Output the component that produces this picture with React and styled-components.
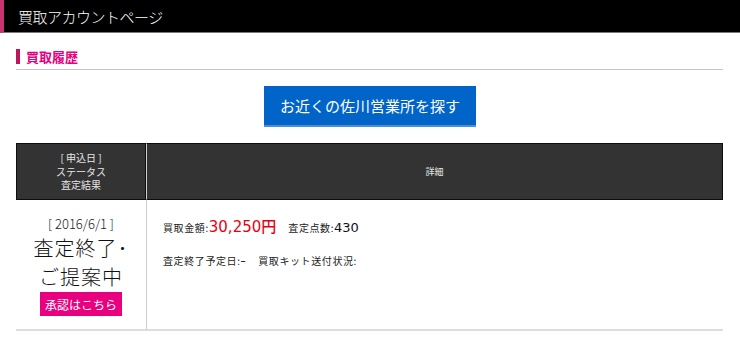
import React from 'react';
import styled, { createGlobalStyle } from 'styled-components';

const Global = createGlobalStyle`
    body {
        margin: 0;
        background: #ffffff;
        font-family: "Noto Sans CJK JP", "Noto Sans", sans-serif;
        color: #222222;
    }
`

const Page = styled.div`
    width: 740px;
    height: 343px;
    overflow: hidden;
    background: #ffffff;
`

const TopBar = styled.header`
    height: 32px;
    background: #000000;
    border-left: 4px solid #c83370;
    border-bottom: 1px solid #7a7a7a;
    display: flex;
    align-items: center;
    padding-left: 14px;
`

const TopTitle = styled.h1`
    margin: 0;
    font-size: 15px;
    font-weight: 300;
    color: #ffffff;
    letter-spacing: -0.5px;
`

const Content = styled.main`
    padding: 16px 17px 0 16px;
`

const SectionTitle = styled.h2`
    margin: 0;
    display: flex;
    align-items: center;
    height: 15px;
    padding-left: 6px;
    border-left: 4px solid #c0155a;
    font-size: 13px;
    font-weight: bold;
    color: #e4007f;
    line-height: 15px;
`

const Rule = styled.div`
    margin-top: 5px;
    height: 1px;
    background: #c4c4c4;
`

const ButtonRow = styled.div`
    display: flex;
    justify-content: center;
    padding: 16px 0 16px 1px;
`

const SearchButton = styled.button`
    width: 212px;
    height: 41px;
    background: #0064c8;
    border: none;
    border-bottom: 2px solid #4c8fd6;
    color: #ffffff;
    font-family: "Noto Sans CJK JP", sans-serif;
    font-size: 15px;
    padding: 0;
`

const Table = styled.div`
    display: grid;
    grid-template-columns: 130px 1fr;
`

const HeadCell = styled.div`
    background: #333333;
    border: 1px solid #0d0d0d;
    border-left: ${p => (p.first ? '1px solid #0d0d0d' : '1px solid #cfcfcf')};
    height: 57px;
    box-sizing: border-box;
    display: flex;
    flex-direction: column;
    align-items: center;
    justify-content: center;
    color: #e6e6e6;
    font-size: ${p => (p.small ? '9px' : '10px')};
    line-height: 13.5px;
`

const BodyCell = styled.div`
    border-bottom: 2px solid #dddddd;
    border-left: ${p => (p.first ? 'none' : '1px solid #cfcfcf')};
    height: 131px;
    box-sizing: border-box;
`

const StatusCell = styled(BodyCell)`
    display: flex;
    flex-direction: column;
    align-items: center;
    padding-top: 15px;
`

const DateText = styled.div`
    font-size: 13px;
    line-height: 18px;
    font-weight: 300;
    color: #222222;
`

const StatusText = styled.div`
    font-size: 20px;
    line-height: 29px;
    font-weight: 300;
    color: #111111;
    text-align: center;
    letter-spacing: 1px;
`

const ApproveButton = styled.button`
    margin-top: 1px;
    width: 82px;
    height: 24px;
    background: #e9007f;
    border: none;
    color: #ffffff;
    font-family: "Noto Sans CJK JP", sans-serif;
    font-size: 12px;
    padding: 0;
`

const DetailCell = styled(BodyCell)`
    padding: 15px 0 0 16px;
`

const InfoLine = styled.div`
    display: flex;
    align-items: baseline;
    gap: 12px;
    font-size: 10px;
    letter-spacing: 0.6px;
    color: #222222;
    margin-bottom: ${p => p.gap || 0};
`

const Pair = styled.span`
    display: inline-flex;
    align-items: baseline;
`

const Price = styled.span`
    font-family: "DejaVu Sans", "Noto Sans CJK JP", sans-serif;
    font-size: 15px;
    letter-spacing: 0;
    color: #e60012;
    font-weight: 500;
`

const Count = styled.span`
    font-family: "DejaVu Sans", sans-serif;
    font-size: 13px;
    letter-spacing: 0;
    color: #111111;
`

export default function App() {
    return (
        <Page>
            <Global />
            <TopBar>
                <TopTitle>買取アカウントページ</TopTitle>
            </TopBar>
            <Content>
                <SectionTitle>買取履歴</SectionTitle>
                <Rule />
                <ButtonRow>
                    <SearchButton>お近くの佐川営業所を探す</SearchButton>
                </ButtonRow>
                <Table>
                    <HeadCell first>
                        <span>[ 申込日 ]</span>
                        <span>ステータス</span>
                        <span>査定結果</span>
                    </HeadCell>
                    <HeadCell small>詳細</HeadCell>
                    <StatusCell first>
                        <DateText>[ 2016/6/1 ]</DateText>
                        <StatusText>査定終了･<br />ご提案中</StatusText>
                        <ApproveButton>承認はこちら</ApproveButton>
                    </StatusCell>
                    <DetailCell>
                        <InfoLine gap="17px">
                            <Pair>買取金額:<Price>30,250円</Price></Pair>
                            <Pair>査定点数:<Count>430</Count></Pair>
                        </InfoLine>
                        <InfoLine>
                            <Pair>査定終了予定日:ｰ</Pair>
                            <Pair>買取キット送付状況:</Pair>
                        </InfoLine>
                    </DetailCell>
                </Table>
            </Content>
        </Page>
    );
}
